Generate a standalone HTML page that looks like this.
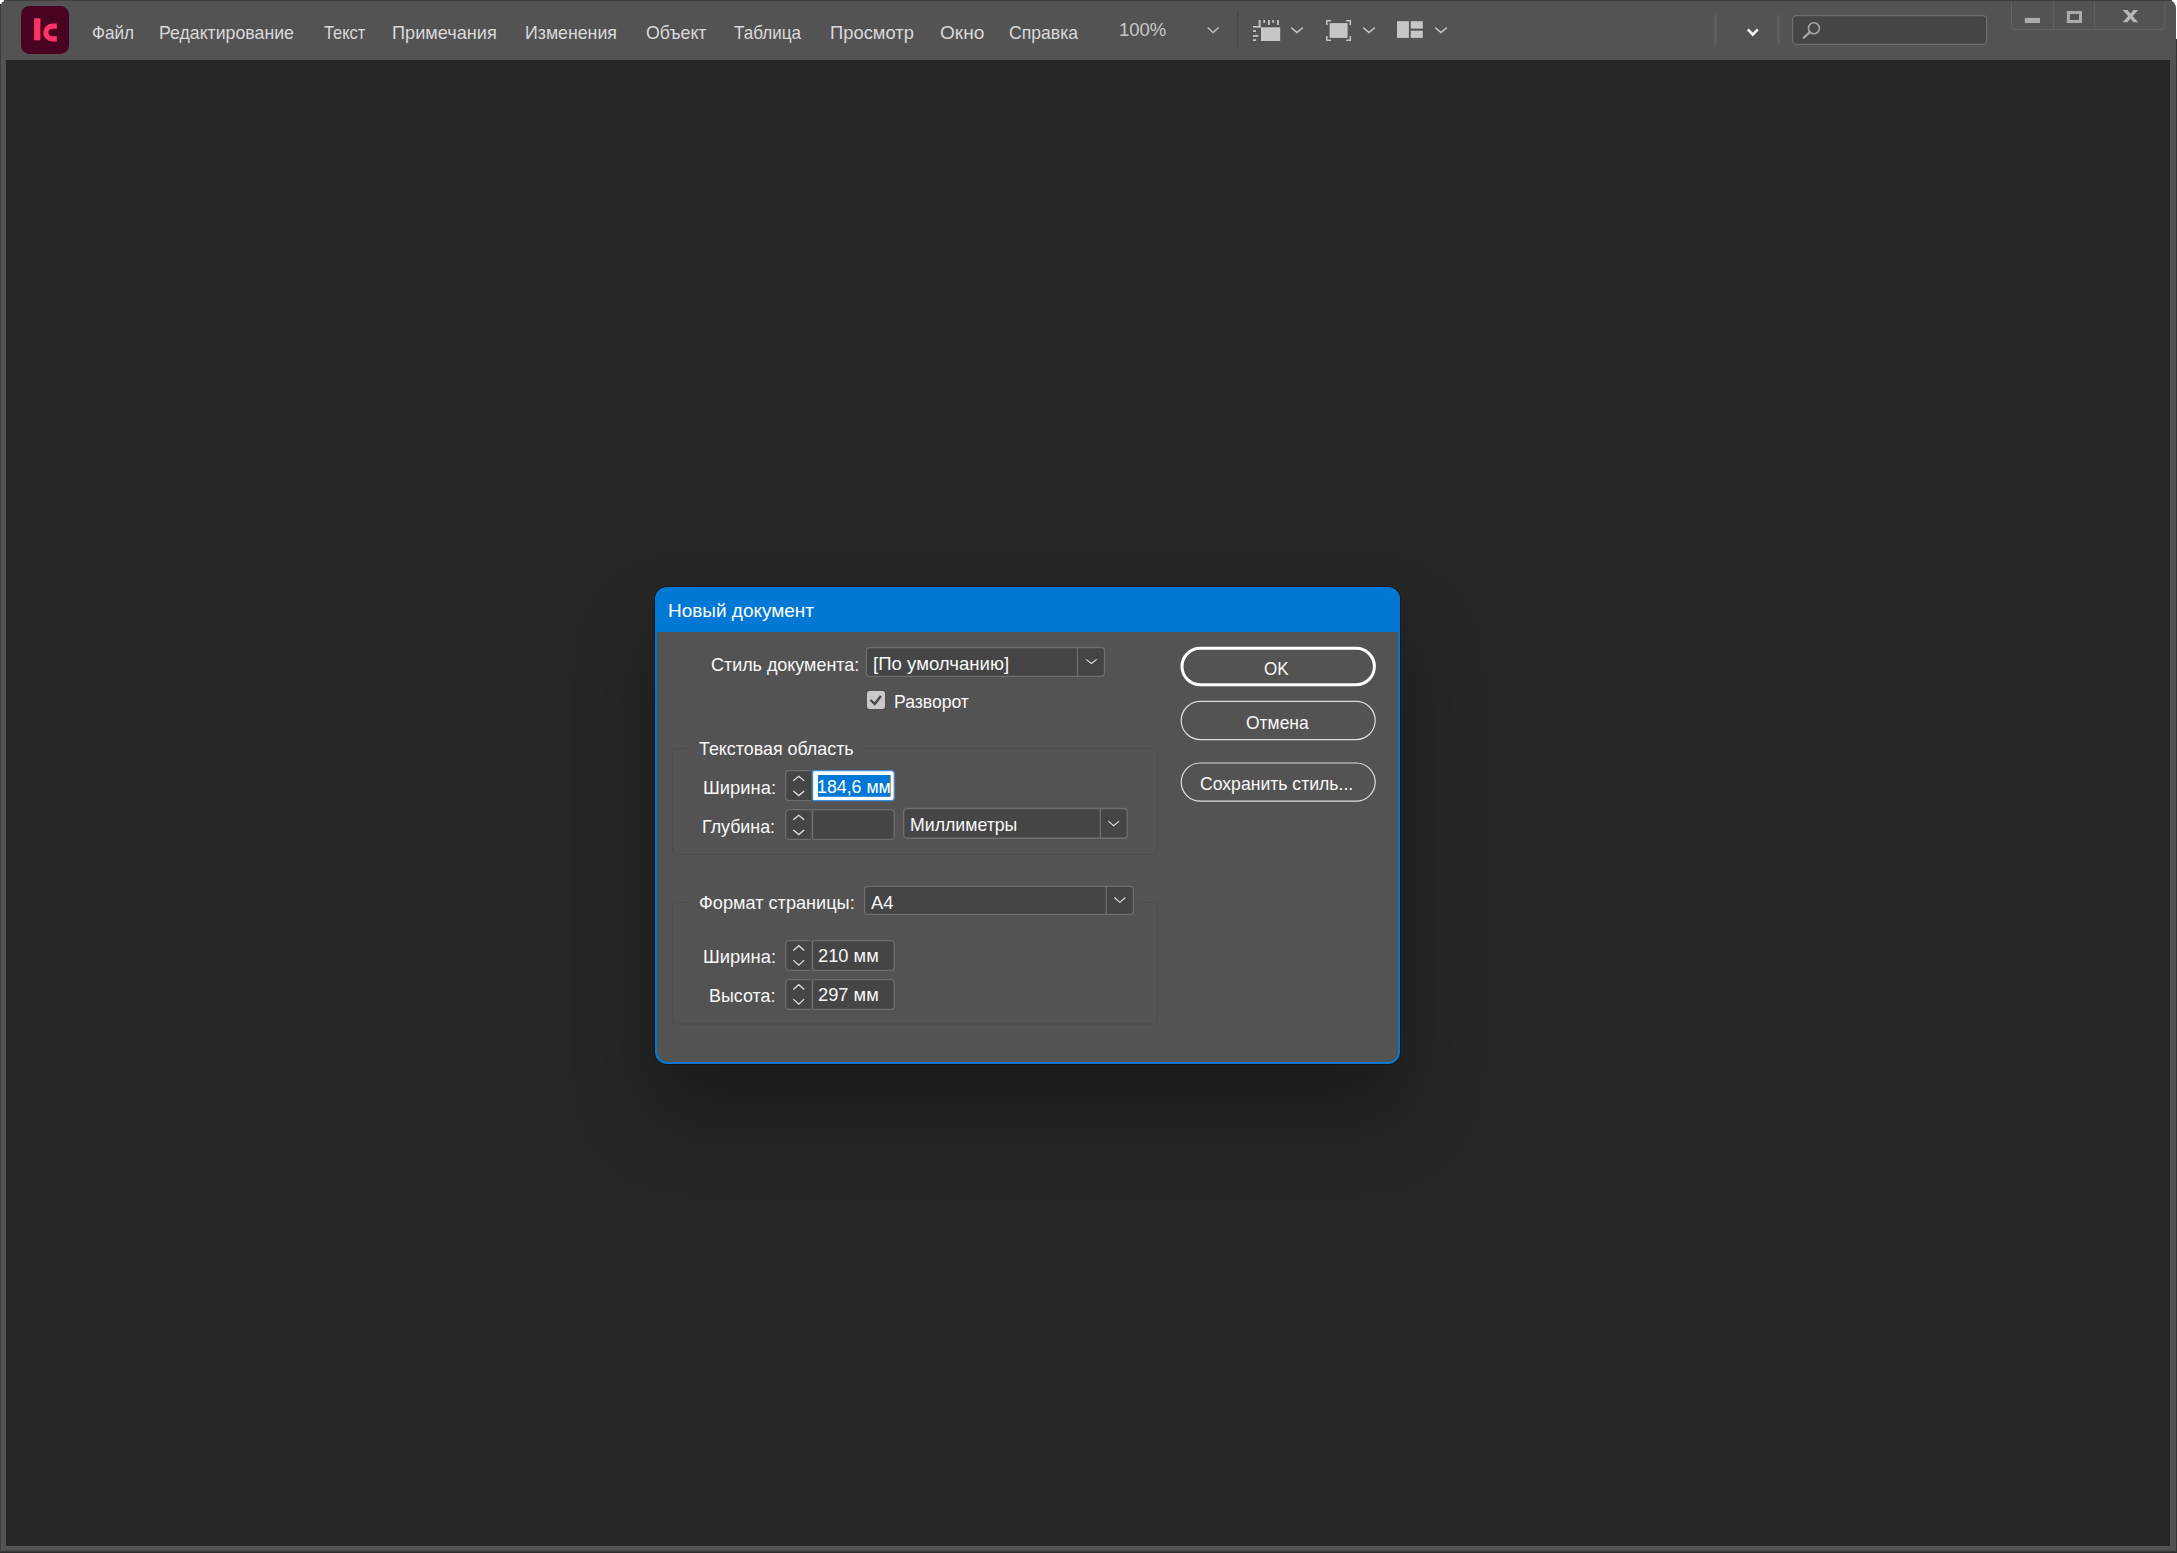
<!DOCTYPE html>
<html><head><meta charset="utf-8"><title>InCopy</title>
<style>
html,body{margin:0;padding:0;background:#fff;}
body{width:2177px;height:1553px;position:relative;overflow:hidden;font-family:"Liberation Sans",sans-serif;}
#win{position:absolute;left:0;top:0;width:2176px;height:1553px;background:#535353;border-radius:8px 8px 0 0;overflow:hidden;}
#edgeL{position:absolute;left:0;top:4px;width:1px;height:1549px;background:#3d3d3d;}
#edgeT{position:absolute;left:4px;top:0;width:2168px;height:1px;background:#3d3d3d;}
#edgeB{position:absolute;left:0;top:1549px;width:2177px;height:4px;background:linear-gradient(#535353,#4c4c4c 30%,#3a3a3a 65%,#272727);}
#edgeR{position:absolute;left:2176px;top:39px;width:1px;height:1514px;background:#333;}
#content{position:absolute;left:6px;top:60px;width:2164px;height:1486px;background:#262626;}
#dlg{position:absolute;left:655px;top:587px;width:745px;height:477px;border-radius:12px;background:#0078d4;box-shadow:0 48px 80px 0 rgba(0,0,0,.31),0 0 0 1px rgba(20,10,5,.45);}
#dlgbody{position:absolute;left:2px;top:45px;width:741px;height:430px;background:#535353;border-radius:0 0 10px 10px;}
.t{position:absolute;white-space:nowrap;line-height:24px;transform-origin:0 0;}
svg{position:absolute;left:0;top:0;}
</style></head><body>
<div id="win"><div id="content"></div></div>
<div id="edgeL"></div><div id="edgeT"></div><div id="edgeB"></div><div id="edgeR"></div>
<div id="dlg"><div id="dlgbody"></div></div>
<svg width="2177" height="1553" viewBox="0 0 2177 1553">
<rect x="21" y="6" width="48" height="48" rx="8.5" fill="#49021f"/>
<rect x="34.1" y="18.3" width="6.3" height="22" fill="#ff3366"/>
<path d="M56.8,26.05 H52.3 A6.7,6.38 0 0 0 52.3,38.8 H56.8" fill="none" stroke="#ff3366" stroke-width="5.2"/>
<polyline points="1207.6,27.4 1213.1,32.5 1218.6,27.4" fill="none" stroke="#c4c4c4" stroke-width="1.3" stroke-linecap="butt" stroke-linejoin="miter"/>
<rect x="1237" y="11" width="1.3" height="35.5" fill="#474747"/>
<rect x="1261" y="27.3" width="19.2" height="13.7" fill="#c6c6c6"/>
<rect x="1258.7" y="20" width="1.9" height="7.5" fill="#c6c6c6"/>
<rect x="1253" y="26" width="7.6" height="1.6" fill="#c6c6c6"/>
<rect x="1263.3" y="20" width="1.8" height="2.8" fill="#c6c6c6"/>
<rect x="1268" y="20" width="1.8" height="5" fill="#c6c6c6"/>
<rect x="1272.3" y="20" width="1.8" height="2.8" fill="#c6c6c6"/>
<rect x="1277" y="20" width="1.8" height="5" fill="#c6c6c6"/>
<rect x="1253" y="30.2" width="3" height="1.8" fill="#c6c6c6"/>
<rect x="1253" y="35" width="5.3" height="1.8" fill="#c6c6c6"/>
<rect x="1253" y="39.2" width="3" height="1.8" fill="#c6c6c6"/>
<polyline points="1291.2,27.4 1297.0,32.6 1302.8,27.4" fill="none" stroke="#cfcfcf" stroke-width="1.3" stroke-linecap="butt" stroke-linejoin="miter"/>
<rect x="1329.6" y="23.1" width="18" height="14.8" fill="#c6c6c6"/>
<polyline points="1331.0,20.7 1326.8,20.7 1326.8,24.9" fill="none" stroke="#c6c6c6" stroke-width="1.5"/>
<polyline points="1346.1,20.7 1350.3,20.7 1350.3,24.9" fill="none" stroke="#c6c6c6" stroke-width="1.5"/>
<polyline points="1331.0,40.3 1326.8,40.3 1326.8,36.099999999999994" fill="none" stroke="#c6c6c6" stroke-width="1.5"/>
<polyline points="1346.1,40.3 1350.3,40.3 1350.3,36.099999999999994" fill="none" stroke="#c6c6c6" stroke-width="1.5"/>
<polyline points="1363.2,27.4 1369.0,32.6 1374.8,27.4" fill="none" stroke="#cfcfcf" stroke-width="1.3" stroke-linecap="butt" stroke-linejoin="miter"/>
<rect x="1397" y="21.2" width="11.9" height="16.7" fill="#c6c6c6"/>
<rect x="1410.7" y="21.2" width="12.1" height="7.4" fill="#c6c6c6"/>
<rect x="1410.7" y="30.7" width="12.1" height="7.2" fill="#c6c6c6"/>
<polyline points="1435.2,27.4 1441.0,32.6 1446.8,27.4" fill="none" stroke="#cfcfcf" stroke-width="1.3" stroke-linecap="butt" stroke-linejoin="miter"/>
<rect x="1714" y="15" width="3" height="30" fill="#5c5c5c"/>
<rect x="1777" y="15" width="3" height="30" fill="#5c5c5c"/>
<polyline points="1747.8,29.4 1752.8,34.6 1757.8,29.4" fill="none" stroke="#f4f4f4" stroke-width="2.6" stroke-linecap="butt"/>
<rect x="1792.6" y="15.6" width="194" height="28.8" rx="4" fill="#454545" stroke="#707070" stroke-width="1.2"/>
<circle cx="1813.9" cy="28.2" r="5.5" fill="none" stroke="#a6a6a6" stroke-width="1.6"/>
<line x1="1809.7" y1="32.4" x2="1803.8" y2="37.7" stroke="#a6a6a6" stroke-width="2.4" stroke-linecap="round"/>
<path d="M2011.5,2 V26.5 a3,3 0 0 0 3,3 H2161.8 a3,3 0 0 0 3,-3 V2" fill="none" stroke="#626262" stroke-width="1"/>
<rect x="2053.1" y="2" width="1" height="27.5" fill="#626262"/>
<rect x="2094.1" y="2" width="1" height="27.5" fill="#626262"/>
<rect x="2024.8" y="17.9" width="15.2" height="5.1" fill="#ababab"/>
<rect x="2068.4" y="12.5" width="12.1" height="9" fill="none" stroke="#ababab" stroke-width="3"/>
<polygon points="2122.7,9.9 2127.4,9.9 2138.2,22.2 2133.5,22.2" fill="#b6b6b6"/>
<polygon points="2138.2,9.9 2133.5,9.9 2122.7,22.2 2127.4,22.2" fill="#b6b6b6"/>
<rect x="866.4" y="647.5" width="238.10" height="28.90" rx="3.4" fill="#454545" stroke="#6e6e6e" stroke-width="1.3"/><rect x="1076.85" y="647.5" width="1.3" height="28.90" fill="#6e6e6e"/><polyline points="1086.2,659.4 1091.5,663.5 1096.7,659.4" fill="none" stroke="#e0e0e0" stroke-width="1.08" stroke-linecap="butt" stroke-linejoin="miter"/>
<rect x="867" y="691" width="18" height="18" rx="3" fill="#c9c9c9"/>
<polyline points="870.6,700 874.7,704 880.9,696" fill="none" stroke="#484848" stroke-width="2.4" stroke-linejoin="miter"/>
<path d="M688,748.5 H675.6 a3,3 0 0 0 -3,3 V851.4 a3,3 0 0 0 3,3 H1154.5 a3,3 0 0 0 3,-3 V751.5 a3,3 0 0 0 -3,-3 H863.7" fill="none" stroke="#4d4d4d" stroke-width="1"/>
<path d="M810.9,770 H788.9 a4,4 0 0 0 -4,4 V797.2 a4,4 0 0 0 4,4 H810.9 Z" fill="#454545"/><path d="M810.9,770.65 H788.9 a3.35,3.35 0 0 0 -3.35,3.35 V797.2 a3.35,3.35 0 0 0 3.35,3.35 H810.9" fill="none" stroke="#6e6e6e" stroke-width="1.3"/><path d="M814.05,770.65 H891.4 a2.85,2.85 0 0 1 2.85,2.85 V797.7 a2.85,2.85 0 0 1 -2.85,2.85 H814.05 a1.5,1.5 0 0 1 -1.5,-1.5 V772.15 a1.5,1.5 0 0 1 1.5,-1.5 Z" fill="#ffffff" stroke="#3d8fdd" stroke-width="1.3"/><rect x="818" y="775" width="72.1" height="21.8" fill="#0078d7"/><rect x="890" y="775" width="1" height="21.8" fill="#e8902c"/><polyline points="793.3,780.7 798.8,776.3 804.2,780.7" fill="none" stroke="#e2e2e2" stroke-width="1.25" stroke-linecap="butt" stroke-linejoin="miter"/><polyline points="793.3,791.1 798.8,795.6 804.2,791.1" fill="none" stroke="#e2e2e2" stroke-width="1.25" stroke-linecap="butt" stroke-linejoin="miter"/>
<path d="M810.9,809 H788.9 a4,4 0 0 0 -4,4 V836 a4,4 0 0 0 4,4 H810.9 Z" fill="#454545"/><path d="M810.9,809.65 H788.9 a3.35,3.35 0 0 0 -3.35,3.35 V836 a3.35,3.35 0 0 0 3.35,3.35 H810.9" fill="none" stroke="#6e6e6e" stroke-width="1.3"/><path d="M814.05,809.65 H891.4 a2.85,2.85 0 0 1 2.85,2.85 V836.5 a2.85,2.85 0 0 1 -2.85,2.85 H814.05 a1.5,1.5 0 0 1 -1.5,-1.5 V811.15 a1.5,1.5 0 0 1 1.5,-1.5 Z" fill="#454545" stroke="#6e6e6e" stroke-width="1.3"/><polyline points="793.3,819.7 798.8,815.3 804.2,819.7" fill="none" stroke="#e2e2e2" stroke-width="1.25" stroke-linecap="butt" stroke-linejoin="miter"/><polyline points="793.3,830.1 798.8,834.6 804.2,830.1" fill="none" stroke="#e2e2e2" stroke-width="1.25" stroke-linecap="butt" stroke-linejoin="miter"/>
<rect x="903.7" y="808.5" width="223.50" height="29.75" rx="3.4" fill="#454545" stroke="#6e6e6e" stroke-width="1.3"/><rect x="1099.6499999999999" y="808.5" width="1.3" height="29.75" fill="#6e6e6e"/><polyline points="1108.3,821.2 1113.7,825.7 1119.1,821.2" fill="none" stroke="#e0e0e0" stroke-width="1.08" stroke-linecap="butt" stroke-linejoin="miter"/>
<path d="M688,902.5 H675.6 a3,3 0 0 0 -3,3 V1021 a3,3 0 0 0 3,3 H1154.5 a3,3 0 0 0 3,-3 V905.5 a3,3 0 0 0 -3,-3 H1139.3" fill="none" stroke="#4d4d4d" stroke-width="1"/>
<rect x="864.55" y="886.45" width="268.85" height="28.00" rx="3.4" fill="#454545" stroke="#6e6e6e" stroke-width="1.3"/><rect x="1105.6499999999999" y="886.45" width="1.3" height="28.00" fill="#6e6e6e"/><polyline points="1114.4,897.5 1119.9,902.4 1125.4,897.5" fill="none" stroke="#e0e0e0" stroke-width="1.08" stroke-linecap="butt" stroke-linejoin="miter"/>
<path d="M810.9,940 H788.9 a4,4 0 0 0 -4,4 V967 a4,4 0 0 0 4,4 H810.9 Z" fill="#454545"/><path d="M810.9,940.65 H788.9 a3.35,3.35 0 0 0 -3.35,3.35 V967 a3.35,3.35 0 0 0 3.35,3.35 H810.9" fill="none" stroke="#6e6e6e" stroke-width="1.3"/><path d="M814.05,940.65 H891.4 a2.85,2.85 0 0 1 2.85,2.85 V967.5 a2.85,2.85 0 0 1 -2.85,2.85 H814.05 a1.5,1.5 0 0 1 -1.5,-1.5 V942.15 a1.5,1.5 0 0 1 1.5,-1.5 Z" fill="#454545" stroke="#6e6e6e" stroke-width="1.3"/><polyline points="793.3,950.5 798.8,945.7 804.2,950.5" fill="none" stroke="#e2e2e2" stroke-width="1.25" stroke-linecap="butt" stroke-linejoin="miter"/><polyline points="793.3,960.1 798.8,965.2 804.2,960.1" fill="none" stroke="#e2e2e2" stroke-width="1.25" stroke-linecap="butt" stroke-linejoin="miter"/>
<path d="M810.9,979 H788.9 a4,4 0 0 0 -4,4 V1006 a4,4 0 0 0 4,4 H810.9 Z" fill="#454545"/><path d="M810.9,979.65 H788.9 a3.35,3.35 0 0 0 -3.35,3.35 V1006 a3.35,3.35 0 0 0 3.35,3.35 H810.9" fill="none" stroke="#6e6e6e" stroke-width="1.3"/><path d="M814.05,979.65 H891.4 a2.85,2.85 0 0 1 2.85,2.85 V1006.5 a2.85,2.85 0 0 1 -2.85,2.85 H814.05 a1.5,1.5 0 0 1 -1.5,-1.5 V981.15 a1.5,1.5 0 0 1 1.5,-1.5 Z" fill="#454545" stroke="#6e6e6e" stroke-width="1.3"/><polyline points="793.3,989.5 798.8,984.7 804.2,989.5" fill="none" stroke="#e2e2e2" stroke-width="1.25" stroke-linecap="butt" stroke-linejoin="miter"/><polyline points="793.3,999.1 798.8,1004.2 804.2,999.1" fill="none" stroke="#e2e2e2" stroke-width="1.25" stroke-linecap="butt" stroke-linejoin="miter"/>
<rect x="1182" y="648.3" width="192.4" height="36.4" rx="18.2" fill="none" stroke="#ffffff" stroke-width="3"/>
<rect x="1181.2" y="701.4" width="194" height="38.2" rx="19.1" fill="none" stroke="#dedede" stroke-width="1.2"/>
<rect x="1181.2" y="763" width="194" height="38.2" rx="19.1" fill="none" stroke="#dedede" stroke-width="1.2"/>
</svg>
<span class="t" style="left:91.56px;top:21px;font-size:18.2px;color:#d9d9d9;transform:scaleX(0.9419);">Файл</span>
<span class="t" style="left:158.83px;top:21px;font-size:18.2px;color:#d9d9d9;transform:scaleX(0.9737);">Редактирование</span>
<span class="t" style="left:323.50px;top:21px;font-size:18.2px;color:#d9d9d9;transform:scaleX(0.9022);">Текст</span>
<span class="t" style="left:391.90px;top:21px;font-size:18.2px;color:#d9d9d9;transform:scaleX(0.9981);">Примечания</span>
<span class="t" style="left:524.82px;top:21px;font-size:18.2px;color:#d9d9d9;transform:scaleX(0.9753);">Изменения</span>
<span class="t" style="left:646.42px;top:21px;font-size:18.2px;color:#d9d9d9;transform:scaleX(0.9770);">Объект</span>
<span class="t" style="left:734.30px;top:21px;font-size:18.2px;color:#d9d9d9;transform:scaleX(0.9403);">Таблица</span>
<span class="t" style="left:830.29px;top:21px;font-size:18.2px;color:#d9d9d9;transform:scaleX(1.0110);">Просмотр</span>
<span class="t" style="left:940.15px;top:21px;font-size:18.2px;color:#d9d9d9;transform:scaleX(1.0512);">Окно</span>
<span class="t" style="left:1009.33px;top:21px;font-size:18.2px;color:#d9d9d9;transform:scaleX(0.9676);">Справка</span>
<span class="t" style="left:1118.97px;top:18px;font-size:18px;color:#c8c8c8;transform:scaleX(1.0267);">100%</span>
<span class="t" style="left:667.77px;top:599px;font-size:18.5px;color:#ffffff;transform:scaleX(1.0254);">Новый документ</span>
<span class="t" style="left:711.13px;top:653px;font-size:18.5px;color:#f8f8f8;transform:scaleX(0.9682);">Стиль документа:</span>
<span class="t" style="left:872.69px;top:652px;font-size:18.5px;color:#f8f8f8;transform:scaleX(1.0052);">[По умолчанию]</span>
<span class="t" style="left:894.45px;top:690px;font-size:18.5px;color:#f8f8f8;transform:scaleX(0.9500);">Разворот</span>
<span class="t" style="left:698.90px;top:737px;font-size:18.5px;color:#f8f8f8;transform:scaleX(0.9650);">Текстовая область</span>
<span class="t" style="left:702.71px;top:776px;font-size:18.5px;color:#f8f8f8;transform:scaleX(0.9930);">Ширина:</span>
<span class="t" style="left:817.04px;top:775px;font-size:18.5px;color:#ffffff;transform:scaleX(0.9600);">184,6 мм</span>
<span class="t" style="left:701.94px;top:815px;font-size:18.5px;color:#f8f8f8;transform:scaleX(0.9635);">Глубина:</span>
<span class="t" style="left:909.84px;top:813px;font-size:18.5px;color:#f8f8f8;transform:scaleX(0.9573);">Миллиметры</span>
<span class="t" style="left:698.92px;top:891px;font-size:18.5px;color:#f8f8f8;transform:scaleX(0.9808);">Формат страницы:</span>
<span class="t" style="left:870.60px;top:891px;font-size:18.5px;color:#f8f8f8;transform:scaleX(0.9909);">A4</span>
<span class="t" style="left:702.71px;top:945px;font-size:18.5px;color:#f8f8f8;transform:scaleX(0.9930);">Ширина:</span>
<span class="t" style="left:817.51px;top:944px;font-size:18.5px;color:#f8f8f8;transform:scaleX(0.9883);">210 мм</span>
<span class="t" style="left:709.43px;top:984px;font-size:18.5px;color:#f8f8f8;transform:scaleX(0.9667);">Высота:</span>
<span class="t" style="left:817.51px;top:983px;font-size:18.5px;color:#f8f8f8;transform:scaleX(0.9883);">297 мм</span>
<span class="t" style="left:1264.08px;top:657px;font-size:18.5px;color:#f8f8f8;transform:scaleX(0.9192);">OK</span>
<span class="t" style="left:1245.75px;top:711px;font-size:18.5px;color:#f8f8f8;transform:scaleX(0.9455);">Отмена</span>
<span class="t" style="left:1200.15px;top:772px;font-size:18.5px;color:#f8f8f8;transform:scaleX(0.9516);">Сохранить стиль...</span>
</body></html>
